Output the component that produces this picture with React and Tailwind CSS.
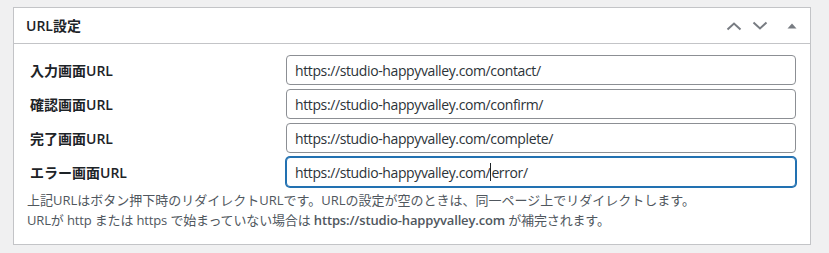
import React from "react";

const font = { fontFamily: '"Open Sans", "Noto Sans CJK JP", sans-serif' };

const rows = [
  { label: "入力画面URL", value: "https://studio-happyvalley.com/contact/" },
  { label: "確認画面URL", value: "https://studio-happyvalley.com/confirm/" },
  { label: "完了画面URL", value: "https://studio-happyvalley.com/complete/" },
  { label: "エラー画面URL", value: "https://studio-happyvalley.com/error/", focused: true, caret: 31 },
];

const UrlField = ({ value, focused, caret }) => {
  if (focused) {
    return (
      <div className="flex items-center w-[510px] h-[30px] px-2 rounded-[4px] border border-[#2271b1] shadow-[0_0_0_1px_#2271b1] text-[14px] tracking-[-0.38px] text-[#2c3338] bg-white">
        <span>{value.slice(0, caret)}</span>
        <span className="inline-block w-px h-[18px] bg-[#1d2327]" />
        <span>{value.slice(caret)}</span>
      </div>
    );
  }
  return (
    <input
      type="text"
      readOnly
      value={value}
      className="w-[510px] h-[30px] px-2 rounded-[4px] border border-[#8c8f94] text-[14px] tracking-[-0.38px] text-[#2c3338] bg-white outline-none"
      style={font}
    />
  );
};

const App = () => {
  return (
    <div className="min-h-screen bg-[#f0f0f1] pt-[7px] pl-[13px]" style={font}>
      <div className="w-[798px] border border-[#c3c4c7] bg-white">
        {/* header */}
        <div className="flex items-center h-[36px] border-b border-[#c3c4c7] pl-3 pr-[13px]">
          <h2 className="text-[14px] font-semibold text-[#1d2327]">URL設定</h2>
          <div className="ml-auto flex items-center text-[#787c82]">
            <svg width="16" height="10" viewBox="0 0 16 10" className="mr-[10px]">
              <path d="M1.5 8.5 L8 2.5 L14.5 8.5" fill="none" stroke="currentColor" strokeWidth="2" />
            </svg>
            <svg width="16" height="10" viewBox="0 0 16 10" className="mr-[19px]">
              <path d="M1.5 1.5 L8 7.5 L14.5 1.5" fill="none" stroke="currentColor" strokeWidth="2" />
            </svg>
            <svg width="10" height="6" viewBox="0 0 10 6">
              <path d="M0.5 5.5 L5 0.5 L9.5 5.5 Z" fill="currentColor" />
            </svg>
          </div>
        </div>

        {/* body */}
        <div className="pt-[11px] pb-[14px] pl-[13px]">
          <div className="flex flex-col gap-1">
            {rows.map((row) => (
              <div key={row.label} className="flex items-center">
                <div className="w-[259px] pl-[3px] text-[14px] font-semibold text-[#1d2327]">{row.label}</div>
                <UrlField value={row.value} focused={row.focused} caret={row.caret} />
              </div>
            ))}
          </div>
          <div className="mt-1 text-[13px] leading-[19.5px] text-[#50575e]">
            <p>上記URLはボタン押下時のリダイレクトURLです。URLの設定が空のときは、同一ページ上でリダイレクトします。</p>
            <p className="tracking-[-0.15px]">
              URLが http または https で始まっていない場合は <strong className="font-semibold">https://studio-happyvalley.com</strong> が補完されます。
            </p>
          </div>
        </div>
      </div>
    </div>
  );
};

export default App;
